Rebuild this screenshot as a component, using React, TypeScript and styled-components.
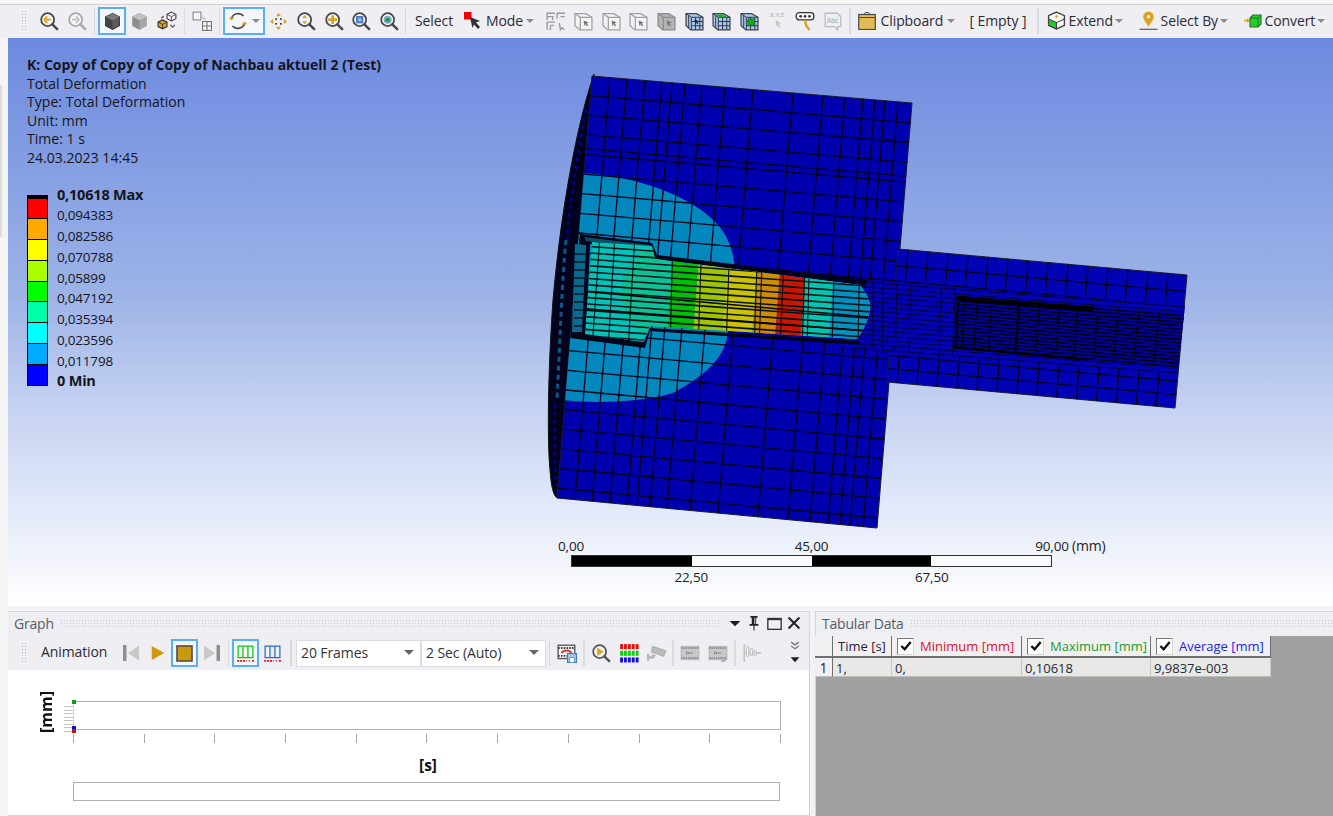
import React from "react";
import styled, { createGlobalStyle } from "styled-components";

const Global = createGlobalStyle`
  html, body { margin: 0; padding: 0; overflow: hidden; background: #f3f3f6; }
  * { box-sizing: border-box; }
`;

const FONT = `"Open Sans", "Noto Sans", "Liberation Sans", sans-serif`;

const Page = styled.div`
  width: 1333px;
  height: 816px;
  display: flex;
  flex-direction: column;
  font-family: ${FONT};
  color: #222;
  overflow: hidden;
`;

const TopBar = styled.div`
  height: 38px;
  flex: none;
  display: flex;
  align-items: center;
  padding: 0 0 0 21px;
  background: #eeeef3;
  border-top: 4px solid #f6f6f6;
  box-shadow: inset 0 1px 0 #cfcfcf;
`;

const Gripper = styled.div`
  width: 6px;
  height: 22px;
  flex: none;
  background: radial-gradient(#b4b4b4 0.8px, transparent 1px) 0 0 / 3px 3px;
`;

const Slot = styled.div<{ $w?: number; $active?: boolean }>`
  width: ${(p) => p.$w ?? 27.7}px;
  height: 28px;
  flex: none;
  display: flex;
  align-items: center;
  justify-content: center;
  gap: 6px;
  border: 2px solid ${(p) => (p.$active ? "#5aaef5" : "transparent")};
  background: ${(p) => (p.$active ? "#f4f6fb" : "transparent")};
`;

const Sep = styled.div<{ $w?: number }>`
  width: ${(p) => p.$w ?? 7}px;
  flex: none;
  height: 26px;
  display: flex;
  justify-content: center;
  &::before {
    content: "";
    width: 1.5px;
    height: 100%;
    background: #d9d9e0;
  }
`;

const Menu = styled.div<{ $w: number; $pl: number; $gap?: number }>`
  width: ${(p) => p.$w}px;
  flex: none;
  display: flex;
  align-items: center;
  gap: ${(p) => p.$gap ?? 5}px;
  padding-left: ${(p) => p.$pl}px;
  padding-bottom: 1px;
  font-size: 14px;
  letter-spacing: -0.1px;
  color: #2b2b33;
  white-space: nowrap;
`;

const Caret = styled.span`
  width: 0;
  height: 0;
  flex: none;
  margin-left: -1.5px;
  border-left: 4px solid transparent;
  border-right: 4px solid transparent;
  border-top: 4px solid #8a8a94;
`;

const Body = styled.div`
  flex: 1;
  display: flex;
  min-height: 0;
`;

const LeftRail = styled.div`
  width: 8px;
  flex: none;
  padding-top: 47px;
  background: #f4f4f5;
  &::before {
    content: "";
    display: block;
    width: 2px;
    height: 152px;
    background: #dcdcdc;
  }
`;

const Content = styled.div`
  flex: 1;
  display: flex;
  flex-direction: column;
  min-width: 0;
`;

const Viewport = styled.div`
  position: relative;
  height: 568px;
  flex: none;
  padding: 18px 0 0 19px;
  background: linear-gradient(#6c8adf 0%, #9db3e7 45%, #c6d3f2 66%, #ffffff 100%);
  color: #15151a;
`;

const Heading = styled.div`
  font-size: 14px;
  font-weight: 700;
  line-height: 18.6px;
`;

const InfoLine = styled.div`
  font-size: 14px;
  line-height: 18.6px;
  letter-spacing: 0.03px;
`;

const Legend = styled.div`
  display: flex;
  gap: 9px;
  margin-top: 27px;
`;

const LegendBar = styled.div`
  width: 21px;
  height: 191px;
  display: flex;
  flex-direction: column;
  gap: 1px;
  padding: 3px 0 0;
  background: #000;
  border: 1px solid #000;
`;

const LegendCell = styled.div<{ $c: string }>`
  flex: 1;
  background: ${(p) => p.$c};
`;

const LegendLabels = styled.div`
  display: flex;
  flex-direction: column;
  justify-content: space-between;
  height: 205px;
  margin-top: -9px;
`;

const LegendLabel = styled.div<{ $bold?: boolean }>`
  font-size: ${(p) => (p.$bold ? 14.5 : 13.5)}px;
  font-weight: ${(p) => (p.$bold ? 700 : 400)};
  line-height: 18px;
  letter-spacing: -0.2px;
`;

const ModelSvg = styled.svg`
  position: absolute;
  left: 0;
  top: 0;
  width: 1325px;
  height: 568px;
  pointer-events: none;
  filter: blur(0.35px);
`;

const Scale = styled.div`
  position: absolute;
  left: 563px;
  top: 499px;
  width: 481px;
  font-size: 13.5px;
  letter-spacing: -0.2px;
  color: #222;
`;

const ScaleRow = styled.div`
  display: grid;
  grid-template-columns: repeat(4, 1fr);
  height: 18px;
`;

const ScaleBar = styled.div`
  display: grid;
  grid-template-columns: repeat(4, 1fr);
  height: 12px;
  margin-bottom: 1px;
  border: 1px solid #333;
`;

const ScaleSeg = styled.div<{ $dark?: boolean }>`
  background: ${(p) => (p.$dark ? "#000" : "#fbfbff")};
`;

const ScaleTick = styled.div`
  position: relative;
  line-height: 18px;
`;

const ScaleText = styled.span<{ $at: "start" | "end" }>`
  position: absolute;
  white-space: nowrap;
  transform: translateX(-50%);
  ${(p) => (p.$at === "end" ? "left: 100%;" : "left: 0;")}
`;

const ScaleUnit = styled.span`
  position: absolute;
  left: calc(100% + 20px);
  white-space: nowrap;
  font-size: 14px;
`;

const Strip = styled.div`
  height: 5px;
  flex: none;
  background: #f3f3f6;
`;

const BottomRow = styled.div`
  flex: 1;
  display: flex;
  gap: 5px;
  min-height: 0;
`;

const GraphPanel = styled.div`
  width: 802px;
  flex: none;
  display: flex;
  flex-direction: column;
  border-top: 1px solid #d4d4dc;
  border-right: 1px solid #d4d4dc;
  border-bottom: 1px solid #d4d4dc;
`;

const TabPanel = styled.div`
  flex: 1;
  display: flex;
  flex-direction: column;
  border-top: 1px solid #d4d4dc;
  border-left: 1px solid #d4d4dc;
`;

const PanelTitle = styled.div`
  height: 24px;
  flex: none;
  display: flex;
  align-items: center;
  gap: 6px;
  padding: 0 0 2px 6px;
  font-size: 14px;
  letter-spacing: -0.2px;
  color: #5a5a62;
  background: #eeeef3;
`;

const Dots = styled.div`
  flex: 1;
  height: 8px;
  background: radial-gradient(#c8c8cc 0.8px, transparent 1px) 0 0 / 3px 3px;
`;

const TitleIcons = styled.div`
  display: flex;
  align-items: center;
  gap: 5px;
  padding: 0 8px 0 2px;
`;

const GraphTools = styled.div`
  height: 34px;
  flex: none;
  display: flex;
  align-items: center;
  padding-left: 13px;
  background: #eeeef3;
`;

const ToolLabel = styled.div`
  width: 76px;
  margin-left: 14px;
  padding-bottom: 3px;
  font-size: 14px;
  letter-spacing: -0.1px;
  color: #2b2b33;
`;

const Combo = styled.div`
  width: 125px;
  height: 27px;
  flex: none;
  display: flex;
  align-items: center;
  justify-content: space-between;
  padding: 0 6px 1px 4px;
  font-size: 14px;
  letter-spacing: -0.1px;
  color: #333;
  background: #fff;
  border: 1px solid #dcdce4;
  ${Caret} { border-top-color: #666; border-left-width: 5px; border-right-width: 5px; border-top-width: 5px; }
`;

const Overflow = styled.div`
  margin-left: auto;
  width: 24px;
  display: flex;
  flex-direction: column;
  align-items: center;
  gap: 4px;
  padding-right: 5px;
`;

const ChartArea = styled.div`
  flex: 1;
  padding: 31px 0 0 30px;
  background: #fff;
`;

const PlotRow = styled.div`
  display: flex;
  align-items: stretch;
`;

const YLabel = styled.div`
  width: 16px;
  height: 44px;
  margin-top: -11px;
  display: flex;
  align-items: center;
  justify-content: center;
  writing-mode: vertical-rl;
  transform: rotate(180deg);
  font-size: 16px;
  font-weight: 700;
  color: #111;
`;

const YTicks = styled.div`
  width: 9px;
  margin-left: 10px;
  padding: 3px 0 0;
  display: flex;
  flex-direction: column;
  justify-content: space-between;
  &::before, &::after { content: ""; }
`;

const YTick = styled.div`
  height: 1px;
  background: #c4c4c4;
`;

const Plot = styled.div`
  position: relative;
  width: 708px;
  height: 29px;
  border: 1px solid #b4b4b4;
  border-left: 1px solid #d8d8d8;
`;

const Marker = styled.span<{ $c: string; $top: number }>`
  position: absolute;
  left: -2px;
  top: ${(p) => p.$top}px;
  width: 4px;
  height: 4px;
  background: ${(p) => p.$c};
`;

const TickRow = styled.div`
  width: 708px;
  height: 9px;
  margin-left: 35px;
  display: flex;
  justify-content: space-between;
`;

const XTick = styled.div`
  width: 1px;
  background: #a8a8a8;
`;

const XLabel = styled.div`
  width: 708px;
  margin: 12px 0 0 36px;
  text-align: center;
  font-size: 15.5px;
  font-weight: 700;
  line-height: 20px;
  color: #111;
`;

const RangeBox = styled.div`
  width: 707px;
  height: 19px;
  margin: 7px 0 0 35px;
  border: 1.5px solid #b0b0b0;
`;

const TabBody = styled.div`
  flex: 1;
  background: #a0a0a0;
`;

const Table = styled.div`
  width: 456px;
  margin-left: -1px;
  display: grid;
  grid-template-columns: 18px 59px 130px 129px 120px;
  grid-template-rows: 22px 19px;
  font-size: 13px;
`;

const HeadCell = styled.div<{ $c?: string }>`
  display: flex;
  align-items: center;
  gap: 6px;
  padding-left: 5px;
  color: ${(p) => p.$c ?? "#2a2035"};
  background: #f0f0f2;
  border-right: 1px solid #6e6e6e;
  border-bottom: 2px solid #6e6e6e;
`;

const RowHead = styled(HeadCell)`
  justify-content: center;
  padding-left: 0;
  padding-top: 1px;
  font-size: 14px;
  border-bottom: 1px solid #bdbdbd;
`;

const DataCell = styled.div`
  display: flex;
  align-items: center;
  padding: 1px 0 0 3px;
  color: #222a38;
  background: #e9e8e4;
  border-right: 1px solid #c8c8c4;
  border-bottom: 1px solid #bdbdbd;
`;

const Check = styled.span`
  width: 17px;
  height: 17px;
  flex: none;
  display: flex;
  align-items: center;
  justify-content: center;
  background: #fff;
  border: 1.5px solid #7c7c7c;
  border-right-color: #d8d8d8;
  border-bottom-color: #d8d8d8;
`;

const Ico = styled.svg.attrs({ viewBox: "0 0 18 18" })<{ $s?: number }>`
  width: ${(p) => p.$s ?? 19}px;
  height: ${(p) => p.$s ?? 19}px;
  flex: none;
  display: block;
`;

const GOLD = "#d9a520";

function Mag({ ring = "#484848", children }: { ring?: string; children?: React.ReactNode }) {
  return (
    <Ico $s={20}>
      <circle cx="7.8" cy="7.8" r="5.8" fill="#f7f7fa" stroke={ring} strokeWidth="1.6" />
      <path d="M12 12l4.4 4.4" stroke={ring} strokeWidth="2.2" strokeLinecap="round" />
      {children}
    </Ico>
  );
}

function Cube({ top, left, right, line }: { top: string; left: string; right: string; line: string }) {
  return (
    <Ico $s={19}>
      <path d="M9 1.5l6.5 3v8.5L9 16.5 2.5 13V4.5z" fill={right} stroke={line} strokeWidth="1" />
      <path d="M2.5 4.5L9 7.8V16.5L2.5 13z" fill={left} />
      <path d="M2.5 4.5L9 1.5l6.5 3L9 7.8z" fill={top} />
    </Ico>
  );
}

function MultiCube() {
  return (
    <Ico $s={20}>
      <path d="M9 3l4-2 4 2v4l-4 2-4-2z" fill="#f4f4f4" stroke="#444" strokeWidth="1" />
      <path d="M9 3l4 2 4-2M13 5v4" fill="none" stroke="#444" strokeWidth="0.8" />
      <path d="M1 10l4-2 4 2v4l-4 2-4-2z" fill={GOLD} stroke="#333" strokeWidth="1" />
      <path d="M1 10l4 2 4-2M5 12v4" fill="none" stroke="#333" strokeWidth="0.8" />
      <path d="M4 6.5l2-2M12 12.5l2 2 2-2" fill="none" stroke="#555" strokeWidth="1.2" />
    </Ico>
  );
}

function SquareGrid() {
  return (
    <Ico $s={20}>
      <rect x="1" y="1" width="7" height="7" fill="#f8f8f8" stroke="#888" strokeWidth="1" />
      <path d="M8 4l4 4" stroke="#bbb" strokeWidth="1.2" />
      <rect x="9.5" y="9.5" width="8" height="8" fill="#f8f8f8" stroke="#777" strokeWidth="1" />
      <path d="M13.5 9.5v8M9.5 13.5h8" stroke="#777" strokeWidth="1" />
    </Ico>
  );
}

function Rotate() {
  return (
    <Ico $s={20}>
      <path d="M3 7a6.5 6.5 0 0 1 11-2.5M15 11a6.5 6.5 0 0 1-11 2.5" fill="none" stroke="#444" strokeWidth="1.4" />
      <path d="M1 6.5l2.5 1.6L5 6zM17 11.5l-2.5-1.6L13 12z" fill={GOLD} stroke={GOLD} strokeWidth="0.8" />
    </Ico>
  );
}

function Pan() {
  return (
    <Ico $s={19}>
      <path d="M9 1l2.5 3h-5zM9 17l2.5-3h-5zM1 9l3-2.5v5zM17 9l-3-2.5v5z" fill={GOLD} />
      <rect x="6" y="6" width="1.6" height="1.6" fill="#333" />
      <rect x="10.4" y="6" width="1.6" height="1.6" fill="#333" />
      <rect x="6" y="10.4" width="1.6" height="1.6" fill="#333" />
      <rect x="10.4" y="10.4" width="1.6" height="1.6" fill="#333" />
    </Ico>
  );
}

function ArrowMode() {
  return (
    <Ico $s={18}>
      <rect x="0" y="0" width="7.5" height="7.5" fill="#f40000" />
      <path d="M6 5l10 4-4 1.6 4 4.4-2 2-4-4.4L8.4 16z" fill="#333" />
    </Ico>
  );
}

function Corners() {
  return (
    <Ico $s={20}>
      <path d="M1 8V2h7M1 5h5v3M10 2h7M10 2v5M13 5h4M1 10h7M1 10v7M4 13h3M4 13v4M12 11l1 6 1.5-2 2 2" fill="none" stroke="#9a9a9a" strokeWidth="1.2" />
    </Ico>
  );
}

function OutlineBox({ fill = "#f4f4f7", dark = false }: { fill?: string; dark?: boolean }) {
  const c = dark ? "#8c8c8c" : "#a0a0a0";
  return (
    <Ico $s={19}>
      <path d="M1 1.5h10l6 3.5v12H5.5L1 13z" fill={fill} stroke={c} strokeWidth="1.2" />
      <path d="M1 1.5l5 3.5h11M6 5v12" fill="none" stroke={c} strokeWidth="1.2" />
      <path d="M9 8l5 2-2 .8 1.5 2-1 .8-1.5-2-1 1.8z" fill="#777" />
    </Ico>
  );
}

function MeshBox({ accent }: { accent?: "top" | "center" }) {
  return (
    <Ico $s={19}>
      <path d="M1 1.5h10l6 3.5v12H5.5L1 13z" fill="#a8c8ee" stroke="#444" strokeWidth="1.2" />
      <path d="M1 1.5l5 3.5h11M6 5v12M10 5v12M14 5v12M6 9h11M6 13h11M3.5 3v12" fill="none" stroke="#334" strokeWidth="0.9" />
      {accent === "top" && <path d="M3 2.4h7l4 2.4H7z" fill="#12b012" />}
      {accent === "center" && <rect x="7.5" y="6.5" width="6" height="6" fill="#12b012" stroke="#063" strokeWidth="0.7" />}
      {!accent && <path d="M9 7l4 1.6-1.6.7 1.2 1.6-.9.7-1.2-1.6-.9 1.5z" fill="#222" />}
    </Ico>
  );
}

function Xyz() {
  return (
    <Ico $s={22}>
      <text x="9" y="6" textAnchor="middle" fontSize="5" fontWeight="700" fill="#bcbcbc" fontFamily="Liberation Sans">X.Y.Z</text>
      <path d="M8 8l4.5 3.5-2 .4 1.2 2.6-1 .5-1.2-2.6-1.4 1.3z" fill="#c8c8c8" />
    </Ico>
  );
}

function KeyPin() {
  return (
    <Ico $s={20}>
      <rect x="1" y="1.5" width="16" height="6.5" rx="3" fill="#f8f8f8" stroke="#333" strokeWidth="1.2" />
      <circle cx="5" cy="4.8" r="1.2" fill="#333" />
      <circle cx="9" cy="4.8" r="1.2" fill="#333" />
      <circle cx="13" cy="4.8" r="1.2" fill="#333" />
      <path d="M9 8l1 5 3 4" fill="none" stroke={GOLD} strokeWidth="2.2" />
    </Ico>
  );
}

function AbcTag() {
  return (
    <Ico $s={20}>
      <path d="M2 2h11l3 3v9h-3v3l-3-3H2z" fill="#eeeeee" stroke="#bdbdbd" strokeWidth="1.2" />
      <text x="8.5" y="11" textAnchor="middle" fontSize="6" fill="#a8a8a8" fontFamily="Liberation Sans">Abc</text>
    </Ico>
  );
}

function ClipboardIcon() {
  return (
    <Ico $s={18}>
      <rect x="0.7" y="2.5" width="16.6" height="15" fill="#e2bb55" stroke="#4a4a4a" strokeWidth="1.2" />
      <path d="M1 5.5h16M6 2.5l1.5-2h3l1.5 2" fill="none" stroke="#4a4a4a" strokeWidth="1" />
    </Ico>
  );
}

function ExtendIcon() {
  return (
    <Ico $s={19}>
      <path d="M9 1l7.5 3.5v9L9 17l-7.5-3.5v-9z" fill="#fafafa" stroke="#444" strokeWidth="1.3" />
      <path d="M1.5 7.5L9 11v6l-7.5-3.5z" fill="#1ecb2a" stroke="#444" strokeWidth="1" />
      <path d="M9 11l7.5-3.5" stroke="#444" strokeWidth="1" />
      <path d="M9 3l.7 1.5 1.6.4-1.6.5L9 7l-.7-1.6-1.6-.5 1.6-.4z" fill={GOLD} />
    </Ico>
  );
}

function PinIcon() {
  return (
    <Ico $s={19}>
      <path d="M9 0.5a5 5 0 0 1 5 5c0 3.2-3.4 6-5 9.5-1.6-3.5-5-6.3-5-9.5a5 5 0 0 1 5-5z" fill={GOLD} />
      <circle cx="9" cy="5.5" r="1.7" fill="#fbf3d6" />
      <path d="M0.5 17.3h17" stroke="#444" strokeWidth="1" />
    </Ico>
  );
}

function ConvertIcon() {
  return (
    <Ico $s={18}>
      <path d="M0 8.5h3.5" stroke={GOLD} strokeWidth="1.6" />
      <path d="M3 6l3 2.5L3 11z" fill={GOLD} />
      <path d="M6 6l3-3h8v9l-3 3H6z" fill="#22d02c" stroke="#2c6d2c" strokeWidth="1.1" />
      <path d="M6 6h8v9M14 6l3-3" fill="none" stroke="#2c6d2c" strokeWidth="1" />
    </Ico>
  );
}

function PanelCaret() {
  return (
    <Ico $s={12}>
      <path d="M1 6h16l-8 8z" fill="#1c1c1c" />
    </Ico>
  );
}

function PanelPin() {
  return (
    <Ico $s={16}>
      <path d="M5 1h8v2h-1.5v7H14v2H4v-2h2.5V3H5zM8.4 12h1.2v5.5H8.4z" fill="#222" />
      <path d="M9.5 3h1v7h-1z" fill="#eee" />
    </Ico>
  );
}

function PanelMax() {
  return (
    <Ico $s={15}>
      <rect x="1" y="3" width="16" height="13" fill="none" stroke="#333" strokeWidth="1.6" />
      <path d="M1 3.8h16" stroke="#333" strokeWidth="2.4" />
    </Ico>
  );
}

function PanelClose() {
  return (
    <Ico $s={14}>
      <path d="M2 2l14 14M16 2L2 16" stroke="#222" strokeWidth="2.6" />
    </Ico>
  );
}

function SkipBack() {
  return (
    <Ico $s={18}>
      <rect x="1" y="1" width="3.5" height="16" fill="#8e8e8e" />
      <path d="M17 1.5v15L6 9z" fill="#c8c8c8" />
    </Ico>
  );
}

function SkipForward() {
  return (
    <Ico $s={18}>
      <path d="M1 1.5v15L12 9z" fill="#c8c8c8" />
      <rect x="13.5" y="1" width="3.5" height="16" fill="#8e8e8e" />
    </Ico>
  );
}

function Bars({ c }: { c: string }) {
  return (
    <Ico $s={19}>
      <path d="M2 2h14v11H2zM6.6 2v11M11.3 2v11" fill="none" stroke={c} strokeWidth="1.2" />
      <path d="M1 16h9M12 16h1M15 16h2" stroke="#e02020" strokeWidth="1.6" strokeDasharray="2 .8" />
    </Ico>
  );
}

function FilmSave() {
  return (
    <Ico $s={20}>
      <rect x="1" y="2" width="15" height="12" fill="#f4f4f4" stroke="#555" strokeWidth="1.2" />
      <path d="M1 4.5h15M1 11.5h15" stroke="#444" strokeWidth="1.6" strokeDasharray="1.5 1" />
      <path d="M4 9a5 4 0 0 1 9 0" fill="none" stroke="#d43b3b" strokeWidth="1.8" />
      <rect x="9.5" y="9.5" width="8" height="8" fill="#a6c8f0" stroke="#3f7cc4" strokeWidth="1" />
      <rect x="11.5" y="13" width="4" height="4.5" fill="#fff" stroke="#3f7cc4" strokeWidth="0.6" />
    </Ico>
  );
}

function RgbGrid() {
  const cols = [1, 4.5, 8, 11.5, 15];
  const rows: [number, string][] = [[1, "#e01010"], [7, "#10d010"], [13, "#1010e0"]];
  return (
    <Ico $s={20}>
      {rows.flatMap(([y, c]) =>
        cols.map((x) => <rect key={`${x}-${y}`} x={x} y={y} width="2.6" height="4.5" fill={c} />)
      )}
    </Ico>
  );
}

function CameraIcon() {
  return (
    <Ico $s={20}>
      <path d="M5 3l12 4-2 5-11-4z" fill="#bdbdbd" stroke="#a2a2a2" strokeWidth="0.8" />
      <path d="M5 10l3 1-2 3H2v2H0v-6h2v2h2z" fill="#b4b4b4" />
    </Ico>
  );
}

function FilmIcon({ curl = false }: { curl?: boolean }) {
  return (
    <Ico $s={20}>
      <rect x="1" y="3" width="16" height="12" fill="#c8c8c8" stroke="#b4b4b4" strokeWidth="0.8" />
      <path d="M1 4.5h16M1 13.5h16" stroke="#8e8e8e" strokeWidth="1.8" strokeDasharray="1.2 .8" />
      <path d="M6 9h6M6 7.5v3M8 8v2" stroke="#8a8a8a" strokeWidth="0.9" />
      {curl && <path d="M12 16a3 3 0 0 0 4-4" fill="none" stroke="#a8a8a8" strokeWidth="1.4" />}
    </Ico>
  );
}

function ChartIcon() {
  return (
    <Ico $s={20}>
      <path d="M2 1v16M2 9h15" stroke="#bdbdbd" strokeWidth="1.2" />
      <path d="M4 3h2v9H4zM7.5 5h2v6h-2zM11 7h2v4h-2z" fill="#f4f4f4" stroke="#bdbdbd" strokeWidth="0.8" />
    </Ico>
  );
}

function CheckMark() {
  return (
    <Ico $s={12}>
      <path d="M2 9l5 5L16 3" fill="none" stroke="#111" strokeWidth="3.6" />
    </Ico>
  );
}

/* ---------- mesh drawing ---------- */

type P = [number, number];
type Quad = [P, P, P, P];

const bil = (q: Quad, u: number, v: number): P => {
  const tx = q[0][0] + (q[1][0] - q[0][0]) * u;
  const ty = q[0][1] + (q[1][1] - q[0][1]) * u;
  const bx = q[3][0] + (q[2][0] - q[3][0]) * u;
  const by = q[3][1] + (q[2][1] - q[3][1]) * u;
  return [tx + (bx - tx) * v, ty + (by - ty) * v];
};

const seg = (a: P, b: P) => `M${a[0].toFixed(1)} ${a[1].toFixed(1)}L${b[0].toFixed(1)} ${b[1].toFixed(1)}`;
const colPath = (q: Quad, us: number[], v0 = 0, v1 = 1) => us.map((u) => seg(bil(q, u, v0), bil(q, u, v1))).join("");
const rowPath = (q: Quad, vs: number[], u0 = 0, u1 = 1) => vs.map((v) => seg(bil(q, u0, v), bil(q, u1, v))).join("");
const poly = (q: Quad) => q.map((p) => p.join(",")).join(" ");
const shift = ([x, y]: P): P => [x - 8, y - 38];
const sq = (q: Quad): Quad => q.map(shift) as Quad;
const rng = (from: number, to: number, step: number) => {
  const out: number[] = [];
  for (let v = from; v <= to + 1e-6; v += step) out.push(v);
  return out;
};

const FACE = sq([[592, 76], [912, 103], [877, 528], [557, 498]]);
const STEM = sq([[898, 249], [1187, 275], [1175, 408], [887, 382]]);
const BORE = sq([[842, 279], [1185, 306], [1177, 373], [842, 347]]);
const DARK = sq([[958, 296], [1184, 314], [1178, 369], [955, 349]]);

const faceCols = [610, 627, 645, 662, 672, 685, 702, 725, 753, 793, 823, 845, 863, 875, 885, 898].map((x) => (x - 592) / 320);
const faceRows = [...rng(0.0465, 0.98, 0.0465), 0.172];
const stemCols = rng(0.035, 0.94, 0.0692);
const BOLT_Y = (y0: number, x: number) => y0 + 0.075 * (x - 590);
const boltRows = rng(246, 346, 6.4).map((y0) => `M574 ${y0 - 0.6}L880 ${BOLT_Y(y0, 880)}`).join("");
const boltCols: [number, number][] = [[600, 592], [615, 608], [635, 628], [673, 670], [702, 698], [730, 726], [758, 754], [763, 759], [785, 780], [806, 802], [810, 807], [835, 832], [860, 858]];

function Model() {
  const stripes: [number, number, string][] = [
    [672, 698, "#02bf06"],
    [698, 727, "#a2c400"],
    [727, 757, "#cdc200"],
    [757, 780, "#d08c00"],
    [780, 806, "#c91604"],
    [806, 834, "#04c4ae"],
    [834, 880, "#0590bd"],
  ];
  return (
    <ModelSvg viewBox="0 0 1325 568">
      <defs>
        <clipPath id="boltClip">
          <path transform="translate(-8 -38)" d="M592 242L652 246L655 259L860 285C868 295 871 303 870 310C868 322 862 332 857 339L650 326L643 342L585 334Z" />
        </clipPath>
        <clipPath id="faceClip">
          <polygon points={poly(FACE)} />
        </clipPath>
      </defs>

      <g transform="translate(-8 -38)">
        {/* left rim of the cylinder */}
        <path d="M594 74C575 130 560 220 553 300C548 370 547 440 550 470C551 485 553 495 557 498L562 440L574 320L588 150Z" fill="#02021c" stroke="#111" strokeWidth="1" />
        <path d="M586 110C578 150 570 200 567 240" fill="none" stroke="#00009a" strokeWidth="2.5" strokeDasharray="4 4" />
        <path d="M566 240C562 280 560 340 557 400" fill="none" stroke="#0a5a88" strokeWidth="3" strokeDasharray="5 4" />
        <path d="M555 404C554 430 554 460 556 486" fill="none" stroke="#00009a" strokeWidth="2.5" strokeDasharray="3 5" />
      </g>

      <polygon points={poly(FACE)} fill="#0000ae" stroke="#1a1a2a" strokeWidth="1" />

      <g clipPath="url(#faceClip)">
        <path
          transform="translate(-8 -38)"
          d="M580 173C640 176 698 198 722 230C733 246 735 262 735 280L727 338C722 362 700 378 673 393C640 402 600 404 560 400Z"
          fill="#0388bd"
        />
      </g>
      <path d={colPath(FACE, faceCols)} stroke="#02021a" strokeWidth="1.3" fill="none" />
      <path d={rowPath(FACE, faceRows)} stroke="#02021a" strokeWidth="1.3" fill="none" />

      {/* stem and bore */}
      <polygon points={poly(STEM)} fill="#0303b6" stroke="#1a1a2a" strokeWidth="1" />
      <path d={colPath(STEM, stemCols)} stroke="#02021a" strokeWidth="1.3" fill="none" />
      <path d={rowPath(STEM, [0.125, 0.24, 0.8, 0.9])} stroke="#02021a" strokeWidth="1.3" fill="none" />
      <polygon points={poly(BORE)} fill="#0303b6" />
      <path d={rowPath(BORE, rng(0.02, 1, 0.07))} stroke="#01012a" strokeWidth="0.9" fill="none" />
      <path d={colPath(BORE, [0.09, 0.12, 0.16, 0.2, 0.29, 0.33])} stroke="#01012a" strokeWidth="0.9" fill="none" />
      <polygon points={poly(DARK)} fill="#0202a2" />
      <path d={rowPath(DARK, rng(0.03, 1, 0.062))} stroke="#000" strokeWidth="1.3" fill="none" />
      <path d={colPath(DARK, [0.03, 0.085, 0.15, 0.27, 0.36, 0.45, 0.53, 0.62, 0.71, 0.8, 0.89])} stroke="#000" strokeWidth="0.9" fill="none" />
      <path d={seg(bil(DARK, 0.27, 0), bil(DARK, 0.27, 1))} stroke="#000" strokeWidth="2" />
      <path d={seg(bil(DARK, 0, 0), bil(DARK, 0, 1))} stroke="#000" strokeWidth="2" />
      <path d={rowPath(DARK, [0.02, 0.07, 0.97], 0, 0.6)} stroke="#000" strokeWidth="2.6" />

      {/* bolt cavity */}
      <g transform="translate(-8 -38)">
        <path d="M580 234L652 243L657 255L868 280L862 292L655 267L650 250L590 244L586 334L644 342L650 328L860 341L861 345L650 331L645 348L570 338Z" fill="#020218" />
        <path d="M575 244L586 245L582 332L572 332Z" fill="#0a6a8e" />
        <path d="M574 254h12M574 262h12M574 270h12M574 278h12M574 286h12M574 294h11M574 302h11M574 310h11M574 318h11M574 326h11" stroke="#021524" strokeWidth="1.5" />
        <path d="M584 237L650 245L650 248L586 241Z" fill="#0f4c68" />
        <path d="M660 259L866 283L862 289L660 265Z" fill="#01012c" />
        <path d="M660 262L862 286" stroke="#0606a0" strokeWidth="0.8" />
      </g>

      {/* bolt */}
      <g clipPath="url(#boltClip)">
        <g transform="translate(-8 -38)">
          <rect x="570" y="230" width="320" height="125" fill="#03c3b9" />
          <ellipse cx="650" cy="292" rx="28" ry="42" fill="#0cc193" />
          {stripes.map(([a, b, c]) => (
            <polygon key={c} points={`${a + 3},230 ${b + 3},230 ${b - 6},350 ${a - 6},350`} fill={c} />
          ))}
          <path d={boltRows} stroke="#03121a" strokeWidth="1.6" fill="none" />
          <path d="M574 290.5L880 318M574 308L880 332" stroke="#000" strokeWidth="1.6" fill="none" />
          {boltCols.map(([a, b]) => (
            <path key={a} d={`M${a} 235L${b} 350`} stroke="#03121a" strokeWidth="1.1" fill="none" />
          ))}
        </g>
      </g>
    </ModelSvg>
  );
}

const legendColors = ["#ff0000", "#ffaa00", "#ffff00", "#aaff00", "#00ff00", "#00ffaa", "#00ffff", "#00aaff", "#0000ff"];
const legendLabels = ["0,094383", "0,082586", "0,070788", "0,05899", "0,047192", "0,035394", "0,023596", "0,011798"];

export default function App() {
  return (
    <Page>
      <Global />
      <TopBar>
        <Gripper />
        <Slot $w={8} />
        <Slot $w={28}><Mag><path d="M4.5 7.8h6.5M4.5 7.8l3-3M4.5 7.8l3 3" fill="none" stroke="#e2a41c" strokeWidth="1.6" /></Mag></Slot>
        <Slot $w={28}><Mag ring="#a8a8a8"><path d="M11 7.8H4.5M11 7.8l-3-3M11 7.8l-3 3" fill="none" stroke="#c4c4c4" strokeWidth="1.6" /></Mag></Slot>
        <Sep />
        <Slot $w={28} $active><Cube top="#7a7a7a" left="#444444" right="#5c5c5c" line="#333" /></Slot>
        <Slot $w={27}><Cube top="#c2c2c2" left="#8c8c8c" right="#a6a6a6" line="#aaa" /></Slot>
        <Slot $w={28}><MultiCube /></Slot>
        <Sep />
        <Slot $w={28}><SquareGrid /></Slot>
        <Sep />
        <Slot $w={42} $active>
          <Rotate />
          <Caret />
        </Slot>
        <Slot $w={27}><Pan /></Slot>
        <Slot $w={28}><Mag><path d="M7.8 3.5l2.4 2.8H5.4zM7.8 12l2.4-2.8H5.4z" fill={GOLD} /></Mag></Slot>
        <Slot $w={27}><Mag><path d="M3.8 7.8h8M7.8 3.8v8" stroke={GOLD} strokeWidth="2.4" /></Mag></Slot>
        <Slot $w={28}><Mag><rect x="4.5" y="4.5" width="6.6" height="6.6" fill="#4d7fc4" /><rect x="6.5" y="6.5" width="2.6" height="2.6" fill="#a9c7ec" /></Mag></Slot>
        <Slot $w={27}><Mag><circle cx="7.8" cy="7.8" r="3.6" fill="#7fa8d8" /><circle cx="7.8" cy="8" r="2" fill="#17a52a" /></Mag></Slot>
        <Sep />
        <Menu $w={51} $pl={6}>Select</Menu>
        <Menu $w={82} $pl={4} $gap={4}>
          <ArrowMode />
          Mode
          <Caret />
        </Menu>
        <Slot><Corners /></Slot>
        <Slot><OutlineBox /></Slot>
        <Slot><OutlineBox /></Slot>
        <Slot><OutlineBox /></Slot>
        <Slot><OutlineBox fill="#b4b4b4" dark /></Slot>
        <Slot><MeshBox /></Slot>
        <Slot><MeshBox accent="top" /></Slot>
        <Slot><MeshBox accent="center" /></Slot>
        <Slot><Xyz /></Slot>
        <Slot><KeyPin /></Slot>
        <Slot><AbcTag /></Slot>
        <Sep />
        <Menu $w={108} $pl={4}>
          <ClipboardIcon />
          Clipboard
          <Caret />
        </Menu>
        <Menu $w={73} $pl={8}>[ Empty ]</Menu>
        <Sep />
        <Menu $w={91} $pl={5} $gap={3}>
          <ExtendIcon />
          Extend
          <Caret />
        </Menu>
        <Menu $w={105} $pl={6} $gap={3}>
          <PinIcon />
          Select By
          <Caret />
        </Menu>
        <Menu $w={95} $pl={6} $gap={3}>
          <ConvertIcon />
          Convert
          <Caret />
        </Menu>
      </TopBar>

      <Body>
        <LeftRail />
        <Content>
          <Viewport>
            <Model />
            <Heading>K: Copy of Copy of Copy of Nachbau aktuell 2 (Test)</Heading>
            <InfoLine>Total Deformation</InfoLine>
            <InfoLine>Type: Total Deformation</InfoLine>
            <InfoLine>Unit: mm</InfoLine>
            <InfoLine>Time: 1 s</InfoLine>
            <InfoLine>24.03.2023 14:45</InfoLine>
            <Legend>
              <LegendBar>
                {legendColors.map((c) => (
                  <LegendCell key={c} $c={c} />
                ))}
              </LegendBar>
              <LegendLabels>
                <LegendLabel $bold>0,10618 Max</LegendLabel>
                {legendLabels.map((l) => (
                  <LegendLabel key={l}>{l}</LegendLabel>
                ))}
                <LegendLabel $bold>0 Min</LegendLabel>
              </LegendLabels>
            </Legend>
            <Scale>
              <ScaleRow>
                <ScaleTick><ScaleText $at="start">0,00</ScaleText></ScaleTick>
                <ScaleTick />
                <ScaleTick><ScaleText $at="start">45,00</ScaleText></ScaleTick>
                <ScaleTick>
                  <ScaleText $at="end">90,00</ScaleText>
                  <ScaleUnit>(mm)</ScaleUnit>
                </ScaleTick>
              </ScaleRow>
              <ScaleBar>
                <ScaleSeg $dark />
                <ScaleSeg />
                <ScaleSeg $dark />
                <ScaleSeg />
              </ScaleBar>
              <ScaleRow>
                <ScaleTick />
                <ScaleTick><ScaleText $at="start">22,50</ScaleText></ScaleTick>
                <ScaleTick />
                <ScaleTick><ScaleText $at="start">67,50</ScaleText></ScaleTick>
              </ScaleRow>
            </Scale>
          </Viewport>
          <Strip />
          <BottomRow>
            <GraphPanel>
              <PanelTitle>
                Graph
                <Dots />
                <TitleIcons>
                  <PanelCaret />
                  <PanelPin />
                  <PanelMax />
                  <PanelClose />
                </TitleIcons>
              </PanelTitle>
              <GraphTools>
                <Gripper />
                <ToolLabel>Animation</ToolLabel>
                <Slot $w={27}><SkipBack /></Slot>
                <Slot $w={27}>
                  <Ico $s={16}><path d="M2 1l14 8-14 8z" fill="#cf9a10" /></Ico>
                </Slot>
                <Slot $w={27} $active>
                  <Ico $s={17}><rect x="1" y="1" width="16" height="16" fill="#c99a10" stroke="#444" strokeWidth="1.5" /></Ico>
                </Slot>
                <Slot $w={27}><SkipForward /></Slot>
                <Sep />
                <Slot $w={27} $active><Bars c="#10c810" /></Slot>
                <Slot $w={27}><Bars c="#2b6fc4" /></Slot>
                <Sep $w={10} />
                <Combo>20 Frames<Caret /></Combo>
                <Combo>2 Sec (Auto)<Caret /></Combo>
                <Sep />
                <Slot $w={28}><FilmSave /></Slot>
                <Sep $w={6} />
                <Slot $w={28}><Mag ring="#555"><path d="M5.5 4l6 3.8-6 3.8z" fill="#d9a520" /></Mag></Slot>
                <Slot $w={28}><RgbGrid /></Slot>
                <Slot $w={27}><CameraIcon /></Slot>
                <Sep $w={6} />
                <Slot $w={28}><FilmIcon /></Slot>
                <Slot $w={28}><FilmIcon curl /></Slot>
                <Sep $w={6} />
                <Slot $w={28}><ChartIcon /></Slot>
                <Overflow>
                  <Ico $s={10}><path d="M2 2l7 5 7-5M2 9l7 5 7-5" fill="none" stroke="#777" strokeWidth="2.4" /></Ico>
                  <Ico $s={10}><path d="M1 4h16l-8 9z" fill="#222" /></Ico>
                </Overflow>
              </GraphTools>
              <ChartArea>
                <PlotRow>
                  <YLabel>[mm]</YLabel>
                  <YTicks>
                    {Array.from({ length: 8 }, (_, i) => (
                      <YTick key={i} />
                    ))}
                  </YTicks>
                  <Plot>
                    <Marker $c="#129a12" $top={-2} />
                    <Marker $c="#1010d0" $top={24} />
                    <Marker $c="#c01010" $top={27} />
                  </Plot>
                </PlotRow>
                <TickRow>
                  {Array.from({ length: 11 }, (_, i) => (
                    <XTick key={i} />
                  ))}
                </TickRow>
                <XLabel>[s]</XLabel>
                <RangeBox />
              </ChartArea>
            </GraphPanel>

            <TabPanel>
              <PanelTitle>
                Tabular Data
                <Dots />
              </PanelTitle>
              <TabBody>
                <Table>
                  <HeadCell />
                  <HeadCell>Time [s]</HeadCell>
                  <HeadCell $c="#d8102c"><Check><CheckMark /></Check>Minimum [mm]</HeadCell>
                  <HeadCell $c="#1d9a2a"><Check><CheckMark /></Check>Maximum [mm]</HeadCell>
                  <HeadCell $c="#2424ee"><Check><CheckMark /></Check>Average [mm]</HeadCell>
                  <RowHead>1</RowHead>
                  <DataCell>1,</DataCell>
                  <DataCell>0,</DataCell>
                  <DataCell>0,10618</DataCell>
                  <DataCell>9,9837e-003</DataCell>
                </Table>
              </TabBody>
            </TabPanel>
          </BottomRow>
        </Content>
      </Body>
    </Page>
  );
}
